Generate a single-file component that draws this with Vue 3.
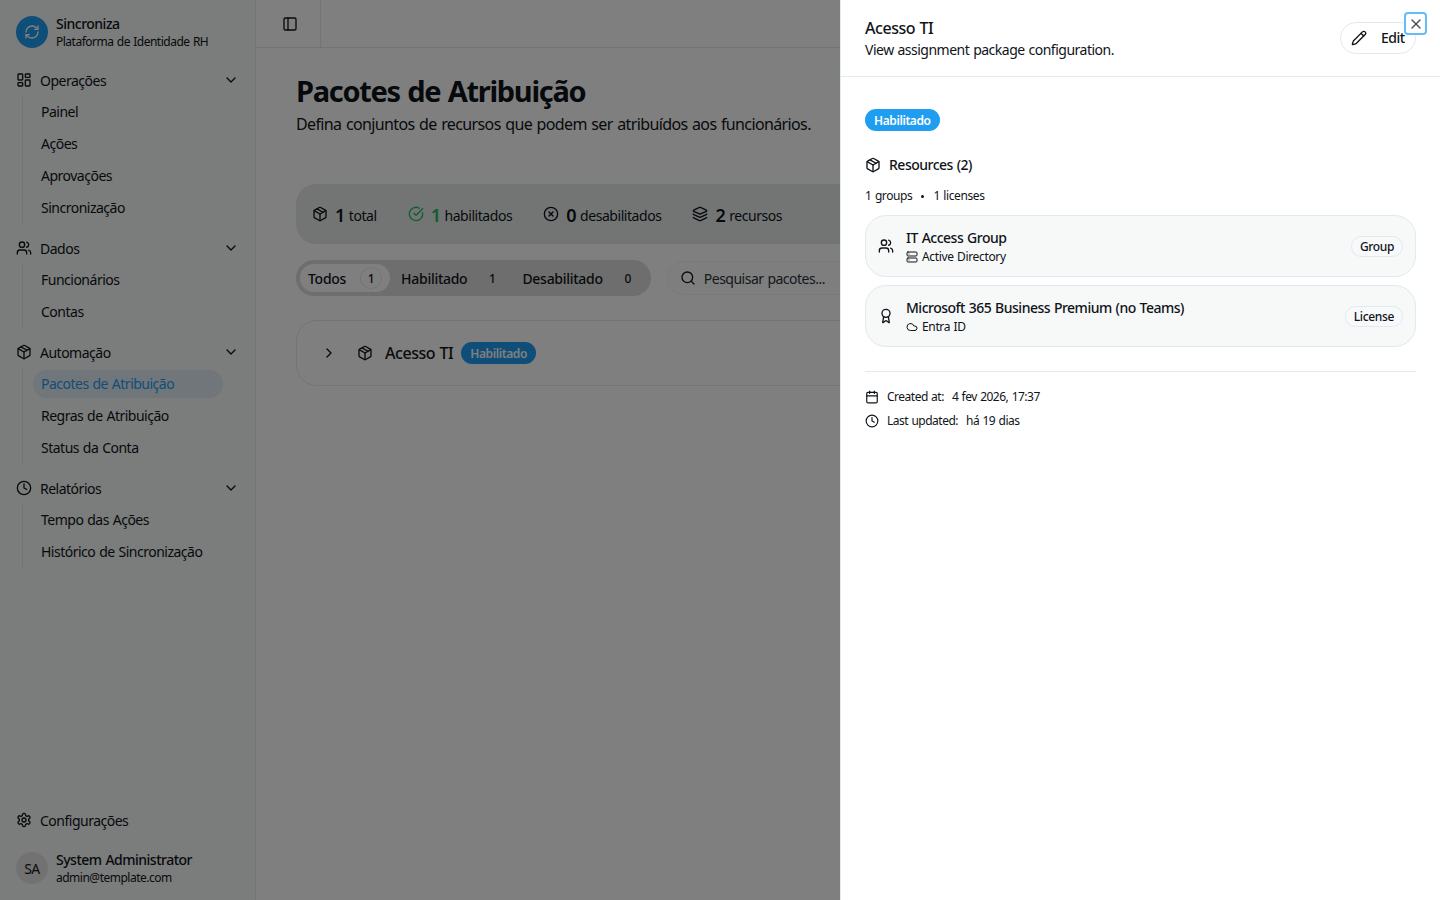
<template>
  <div class="app">
    <aside class="sidebar">
      <div class="brand">
        <span class="logo"><Icon name="refresh" :size="16" /></span>
        <div class="two-line">
          <strong>Sincroniza</strong>
          <span>Plataforma de Identidade RH</span>
        </div>
      </div>

      <nav class="nav">
        <div v-for="group in nav" :key="group.label" class="group">
          <div class="group-row">
            <Icon :name="group.icon" :size="16" />
            <span class="group-label">{{ group.label }}</span>
            <Icon name="chevronDown" :size="16" />
          </div>
          <ul class="sub">
            <li v-for="item in group.items" :key="item" :class="{ active: item === 'Pacotes de Atribuição' }">{{ item }}</li>
          </ul>
        </div>
      </nav>

      <div class="side-foot">
        <div class="group-row">
          <Icon name="settings" :size="16" />
          <span class="group-label">Configurações</span>
        </div>
        <div class="user">
          <span class="avatar">SA</span>
          <div class="two-line">
            <strong>System Administrator</strong>
            <span>admin@template.com</span>
          </div>
        </div>
      </div>
    </aside>

    <main class="main">
      <header class="topbar">
        <div class="trigger"><Icon name="panel" :size="16" /></div>
      </header>
      <section class="content">
        <h1>Pacotes de Atribuição</h1>
        <p class="lead">Defina conjuntos de recursos que podem ser atribuídos aos funcionários.</p>

        <div class="stats">
          <div v-for="s in stats" :key="s.label" class="stat" :class="s.cls">
            <Icon :name="s.icon" :size="16" />
            <b>{{ s.value }}</b>
            <span>{{ s.label }}</span>
          </div>
        </div>

        <div class="filters">
          <div class="tabs">
            <div v-for="t in tabs" :key="t.label" class="tab" :class="{ on: t.on }">
              <span>{{ t.label }}</span>
              <i>{{ t.count }}</i>
            </div>
          </div>
          <div class="search">
            <Icon name="search" :size="16" />
            <input type="text" placeholder="Pesquisar pacotes..." />
          </div>
        </div>

        <div class="pkg">
          <Icon name="chevronRight" :size="16" />
          <Icon name="package" :size="16" class="pkg-icon" />
          <span class="pkg-name">Acesso TI</span>
          <span class="badge">Habilitado</span>
        </div>
      </section>
    </main>

    <div class="overlay"></div>

    <aside class="sheet">
      <header class="sheet-head">
        <div>
          <h2>Acesso TI</h2>
          <p>View assignment package configuration.</p>
        </div>
        <button class="edit"><Icon name="pencil" :size="16" /><span>Edit</span></button>
      </header>
      <button class="close"><Icon name="x" :size="16" /></button>

      <div class="sheet-body">
        <span class="badge">Habilitado</span>

        <div class="res-title"><Icon name="package" :size="16" /><span>Resources (2)</span></div>
        <div class="res-count"><span>1 groups</span><em></em><span>1 licenses</span></div>

        <div class="res-list">
          <div v-for="r in resources" :key="r.name" class="res">
            <Icon :name="r.icon" :size="16" />
            <div class="res-text">
              <strong>{{ r.name }}</strong>
              <span><Icon :name="r.subIcon" :size="12" />{{ r.sub }}</span>
            </div>
            <span class="tag">{{ r.tag }}</span>
          </div>
        </div>

        <div class="meta">
          <div><Icon name="calendar" :size="14" /><span>Created at:</span><span>4 fev 2026, 17:37</span></div>
          <div><Icon name="clock" :size="14" /><span>Last updated:</span><span>há 19 dias</span></div>
        </div>
      </div>
    </aside>
  </div>
</template>

<script setup>
import { h } from 'vue'

const icons = {
  refresh: '<path d="M3 12a9 9 0 0 1 9-9 9.75 9.75 0 0 1 6.74 2.74L21 8"/><path d="M21 3v5h-5"/><path d="M21 12a9 9 0 0 1-9 9 9.75 9.75 0 0 1-6.74-2.74L3 16"/><path d="M8 16H3v5"/>',
  dashboard: '<rect width="7" height="9" x="3" y="3" rx="1"/><rect width="7" height="5" x="14" y="3" rx="1"/><rect width="7" height="9" x="14" y="12" rx="1"/><rect width="7" height="5" x="3" y="16" rx="1"/>',
  users: '<path d="M16 21v-2a4 4 0 0 0-4-4H6a4 4 0 0 0-4 4v2"/><circle cx="9" cy="7" r="4"/><path d="M22 21v-2a4 4 0 0 0-3-3.87"/><path d="M16 3.13a4 4 0 0 1 0 7.75"/>',
  package: '<path d="M11 21.73a2 2 0 0 0 2 0l7-4A2 2 0 0 0 21 16V8a2 2 0 0 0-1-1.73l-7-4a2 2 0 0 0-2 0l-7 4A2 2 0 0 0 3 8v8a2 2 0 0 0 1 1.73z"/><path d="M12 22V12"/><polyline points="3.29 7 12 12 20.71 7"/><path d="m7.5 4.27 9 5.15"/>',
  clock: '<circle cx="12" cy="12" r="10"/><polyline points="12 6 12 12 16 14"/>',
  settings: '<path d="M12.22 2h-.44a2 2 0 0 0-2 2v.18a2 2 0 0 1-1 1.73l-.43.25a2 2 0 0 1-2 0l-.15-.08a2 2 0 0 0-2.73.73l-.22.38a2 2 0 0 0 .73 2.73l.15.1a2 2 0 0 1 1 1.72v.51a2 2 0 0 1-1 1.74l-.15.09a2 2 0 0 0-.73 2.73l.22.38a2 2 0 0 0 2.73.73l.15-.08a2 2 0 0 1 2 0l.43.25a2 2 0 0 1 1 1.73V20a2 2 0 0 0 2 2h.44a2 2 0 0 0 2-2v-.18a2 2 0 0 1 1-1.73l.43-.25a2 2 0 0 1 2 0l.15.08a2 2 0 0 0 2.73-.73l.22-.39a2 2 0 0 0-.73-2.73l-.15-.08a2 2 0 0 1-1-1.74v-.5a2 2 0 0 1 1-1.74l.15-.09a2 2 0 0 0 .73-2.73l-.22-.38a2 2 0 0 0-2.73-.73l-.15.08a2 2 0 0 1-2 0l-.43-.25a2 2 0 0 1-1-1.73V4a2 2 0 0 0-2-2z"/><circle cx="12" cy="12" r="3"/>',
  panel: '<rect width="18" height="18" x="3" y="3" rx="2"/><path d="M9 3v18"/>',
  check: '<path d="M21.801 10A10 10 0 1 1 17 3.335"/><path d="m9 11 3 3L22 4"/>',
  circleX: '<circle cx="12" cy="12" r="10"/><path d="m15 9-6 6"/><path d="m9 9 6 6"/>',
  layers: '<path d="M12.83 2.18a2 2 0 0 0-1.66 0L2.6 6.08a1 1 0 0 0 0 1.83l8.58 3.91a2 2 0 0 0 1.66 0l8.58-3.9a1 1 0 0 0 0-1.83z"/><path d="M2 12a1 1 0 0 0 .58.91l8.6 3.91a2 2 0 0 0 1.65 0l8.58-3.9A1 1 0 0 0 22 12"/><path d="M2 17a1 1 0 0 0 .58.91l8.6 3.91a2 2 0 0 0 1.65 0l8.58-3.9A1 1 0 0 0 22 17"/>',
  search: '<path d="m21 21-4.34-4.34"/><circle cx="11" cy="11" r="8"/>',
  chevronDown: '<path d="m6 9 6 6 6-6"/>',
  chevronRight: '<path d="m9 18 6-6-6-6"/>',
  pencil: '<path d="M21.174 6.812a1 1 0 0 0-3.986-3.987L3.842 16.174a2 2 0 0 0-.5.83l-1.321 4.352a.5.5 0 0 0 .623.622l4.353-1.32a2 2 0 0 0 .83-.497z"/><path d="m15 5 4 4"/>',
  x: '<path d="M18 6 6 18"/><path d="m6 6 12 12"/>',
  award: '<path d="m15.477 12.89 1.515 8.526a.5.5 0 0 1-.81.47l-3.58-2.687a1 1 0 0 0-1.197 0l-3.586 2.686a.5.5 0 0 1-.81-.469l1.514-8.526"/><circle cx="12" cy="8" r="6"/>',
  cloud: '<path d="M17.5 19H9a7 7 0 1 1 6.71-9h1.79a4.5 4.5 0 1 1 0 9Z"/>',
  server: '<rect width="20" height="8" x="2" y="2" rx="2"/><rect width="20" height="8" x="2" y="14" rx="2"/><path d="M6 6h.01"/><path d="M6 18h.01"/>',
  calendar: '<path d="M8 2v4"/><path d="M16 2v4"/><rect width="18" height="18" x="3" y="4" rx="2"/><path d="M3 10h18"/>'
}

const Icon = (props) =>
  h('svg', {
    width: props.size,
    height: props.size,
    viewBox: '0 0 24 24',
    fill: 'none',
    stroke: 'currentColor',
    'stroke-width': 2,
    'stroke-linecap': 'round',
    'stroke-linejoin': 'round',
    style: 'flex:none;display:block',
    innerHTML: icons[props.name]
  })
Icon.props = ['name', 'size']

const nav = [
  { label: 'Operações', icon: 'dashboard', items: ['Painel', 'Ações', 'Aprovações', 'Sincronização'] },
  { label: 'Dados', icon: 'users', items: ['Funcionários', 'Contas'] },
  { label: 'Automação', icon: 'package', items: ['Pacotes de Atribuição', 'Regras de Atribuição', 'Status da Conta'] },
  { label: 'Relatórios', icon: 'clock', items: ['Tempo das Ações', 'Histórico de Sincronização'] }
]

const stats = [
  { icon: 'package', value: 1, label: 'total' },
  { icon: 'check', value: 1, label: 'habilitados', cls: 'green' },
  { icon: 'circleX', value: 0, label: 'desabilitados' },
  { icon: 'layers', value: 2, label: 'recursos' }
]

const tabs = [
  { label: 'Todos', count: 1, on: true },
  { label: 'Habilitado', count: 1 },
  { label: 'Desabilitado', count: 0 }
]

const resources = [
  { name: 'IT Access Group', icon: 'users', subIcon: 'server', sub: 'Active Directory', tag: 'Group' },
  { name: 'Microsoft 365 Business Premium (no Teams)', icon: 'award', subIcon: 'cloud', sub: 'Entra ID', tag: 'License' }
]
</script>

<style>
html, body { height: 100%; overflow: hidden; }
</style>

<style scoped>
* { box-sizing: border-box; }

.app {
  display: flex;
  position: relative;
  height: 900px;
  overflow: hidden;
  background: #fff;
  color: #0f1419;
  font-family: "Noto Sans", "Open Sans", sans-serif;
  font-size: 14px;
  letter-spacing: -0.5px;
  word-spacing: 0.7px;
}

.sidebar {
  display: flex;
  flex-direction: column;
  width: 256px;
  flex: none;
  background: #f7f8f8;
  border-right: 1px solid #e1eaef;
}

.brand {
  display: flex;
  align-items: center;
  gap: 8px;
  height: 64px;
  padding: 0 16px;
}

.logo, .avatar {
  display: flex;
  align-items: center;
  justify-content: center;
  width: 32px;
  height: 32px;
  flex: none;
  border-radius: 50%;
}

.logo { background: #1e9df1; color: #fff; }
.avatar { background: #e5e5e6; }

.two-line { display: flex; flex-direction: column; min-width: 0; }
.two-line strong { font-size: 14px; line-height: 17px; font-weight: 500; white-space: nowrap; }
.two-line span { margin-top: 2px; font-size: 12px; line-height: 16px; white-space: nowrap; }

.nav {
  display: flex;
  flex-direction: column;
  gap: 8px;
  flex: 1;
  padding: 0 8px;
}

.group-row {
  display: flex;
  align-items: center;
  gap: 8px;
  height: 32px;
  padding: 0 8px;
}

.group-label { flex: 1; }

.sub {
  display: flex;
  flex-direction: column;
  gap: 4px;
  margin: 0 14px;
  padding: 2px 10px;
  list-style: none;
  border-left: 1px solid #e1eaef;
}

.sub li {
  height: 28px;
  padding: 0 8px;
  line-height: 28px;
  border-radius: 14px;
  white-space: nowrap;
}

.sub li.active {
  background: #e3ecf6;
  color: #1e9df1;
}

.side-foot { padding: 0 8px 8px; }

.user {
  display: flex;
  align-items: center;
  gap: 8px;
  height: 48px;
  margin-top: 8px;
  padding: 8px;
}

.main { flex: 1; min-width: 0; }

.topbar {
  height: 48px;
  border-bottom: 1px solid #e1eaef;
}

.trigger {
  display: flex;
  align-items: center;
  width: 65px;
  height: 47px;
  padding-left: 26px;
  border-right: 1px solid #e1eaef;
}

.content { padding: 25px 40px 0; }

h1 {
  margin: 0;
  font-size: 29px;
  line-height: 36px;
  font-weight: 700;
  letter-spacing: -1.3px;
  word-spacing: 1.2px;
}

.lead {
  margin: 3px 0 0;
  font-size: 16px;
  line-height: 24px;
  letter-spacing: -0.63px;
  word-spacing: 1px;
}

.stats {
  display: flex;
  align-items: center;
  gap: 31px;
  height: 60px;
  margin-top: 48px;
  padding: 0 16px;
  background: #e6ebeb;
  border-radius: 20px;
}

.stat { display: flex; align-items: center; letter-spacing: -0.45px; }
.stat b { margin: 1px 0 0 7px; font-size: 18px; font-weight: 600; }
.stat span { margin: 2px 0 0 4px; }
.stat.green svg, .stat.green b { color: #25b864; }

.filters {
  display: flex;
  align-items: center;
  gap: 16px;
  margin-top: 16px;
}

.tabs {
  display: flex;
  gap: 3px;
  height: 36px;
  padding: 4px;
  background: #dcdcdd;
  border-radius: 18px;
}

.tab {
  display: flex;
  align-items: center;
  gap: 14px;
  padding: 0 8px;
  font-weight: 500;
  border-radius: 14px;
  letter-spacing: -0.28px;
}

.tab i {
  display: flex;
  align-items: center;
  justify-content: center;
  width: 22px;
  height: 22px;
  font-style: normal;
  font-size: 12px;
  border-radius: 50%;
}

.tab.on { background: #fff; }
.tab.on i { border: 1px solid #e1eaef; }

.search {
  display: flex;
  align-items: center;
  gap: 8px;
  flex: 1;
  height: 34px;
  padding: 0 12px;
  background: #fcfdfd;
  border: 1px solid #f2f4f5;
  border-radius: 17px;
}

.search input {
  flex: 1;
  border: none;
  outline: none;
  padding: 0;
  background: transparent;
  font: inherit;
  letter-spacing: inherit;
  word-spacing: inherit;
}

.search input::placeholder { color: #2a333a; opacity: 1; }

.pkg {
  display: flex;
  align-items: center;
  height: 66px;
  margin-top: 24px;
  padding: 0 24px;
  border: 1px solid #e1eaef;
  border-radius: 21px;
}

.pkg-icon { margin-left: 20px; }
.pkg-name { margin: 0 8px 0 12px; font-size: 16px; font-weight: 500; letter-spacing: -0.45px; }

.badge {
  display: inline-flex;
  align-items: center;
  height: 22px;
  padding: 0 9px;
  background: #1e9df1;
  color: #fff;
  font-size: 12px;
  font-weight: 600;
  border-radius: 11px;
  letter-spacing: -0.4px;
}

.overlay {
  position: absolute;
  inset: 0;
  background: rgba(0, 0, 0, 0.5);
}

.sheet {
  position: absolute;
  top: 0;
  right: 0;
  bottom: 0;
  width: 600px;
  background: #fff;
  border-left: 1px solid #e1eaef;
}

.sheet-head {
  display: flex;
  align-items: center;
  justify-content: space-between;
  height: 77px;
  padding: 0 24px;
  border-bottom: 1px solid #e1eaef;
}

.sheet-head h2 {
  margin: 0;
  font-size: 16px;
  line-height: 24px;
  font-weight: 500;
  letter-spacing: -0.45px;
}

.sheet-head p {
  margin: 0;
  line-height: 20px;
}

.edit {
  display: flex;
  align-items: center;
  gap: 14px;
  width: 76px;
  height: 32px;
  margin-top: -1px;
  padding: 0 10px;
  background: #fff;
  color: inherit;
  border: 1px solid #e1eaef;
  border-radius: 16px;
  font: inherit;
  font-weight: 500;
  letter-spacing: inherit;
}

.close {
  position: absolute;
  top: 12px;
  right: 13px;
  display: flex;
  align-items: center;
  justify-content: center;
  width: 23px;
  height: 23px;
  padding: 0;
  background: #fff;
  color: #4a5157;
  border: 2px solid #63bdf6;
  border-radius: 4px;
}

.sheet-body { padding: 32px 24px 0; }
.sheet-body .badge { vertical-align: top; }

.res-title {
  display: flex;
  align-items: center;
  gap: 8px;
  margin-top: 24px;
  line-height: 20px;
  font-weight: 500;
}

.res-count {
  display: flex;
  align-items: center;
  gap: 9px;
  margin-top: 13px;
  font-size: 12px;
  line-height: 16px;
  letter-spacing: -0.4px;
}

.res-count em {
  width: 3px;
  height: 3px;
  background: #0f1419;
  border-radius: 50%;
}

.res-list {
  display: flex;
  flex-direction: column;
  gap: 8px;
  margin-top: 11px;
}

.res {
  display: flex;
  align-items: center;
  gap: 12px;
  height: 62px;
  padding: 0 12px;
  background: #f7f8f8;
  border: 1px solid #e1eaef;
  border-radius: 21px;
}

.res-text { flex: 1; display: flex; flex-direction: column; }
.res-text strong { font-weight: 500; line-height: 20px; }

.res-text span {
  display: flex;
  align-items: center;
  gap: 4px;
  margin-top: 1px;
  font-size: 12px;
  line-height: 16px;
  letter-spacing: -0.35px;
}

.tag {
  height: 21px;
  padding: 0 8px;
  background: #f7f9fa;
  border: 1px solid #e1eaef;
  border-radius: 11px;
  font-size: 12px;
  line-height: 19px;
  font-weight: 500;
  letter-spacing: -0.35px;
}

.meta {
  display: flex;
  flex-direction: column;
  gap: 8px;
  margin-top: 24px;
  padding-top: 17px;
  border-top: 1px solid #e1eaef;
  font-size: 12px;
  line-height: 16px;
  letter-spacing: -0.5px;
}

.meta div { display: flex; align-items: center; gap: 8px; }
</style>
